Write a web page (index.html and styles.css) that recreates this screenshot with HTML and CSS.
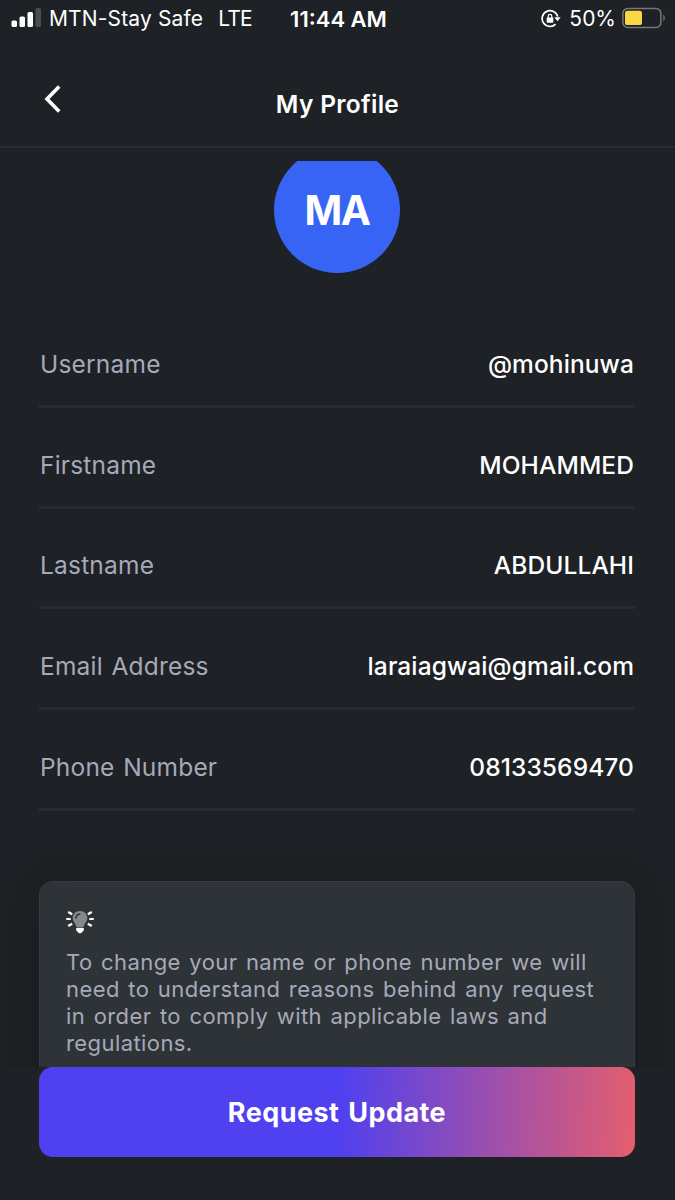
FILE: index.html
```
<!DOCTYPE html>
<html lang="en">

<head>
    <meta charset="UTF-8">
    <meta name="viewport" content="width=device-width, initial-scale=1.0">
    <title>My Profile</title>
    <link rel="stylesheet" href="styles.css">
</head>

<body>
    <div class="screen">
        <!-- Status bar -->
        <div class="status-bar">
            <div class="status-left">
                <svg class="signal" width="30" height="20" viewBox="0 0 30 20">
                    <rect x="0.500" y="12.500" width="5.500" height="6.500" rx="1.600" fill="#fff"/>
                    <rect x="8.500" y="8.500" width="5.500" height="10.500" rx="1.600" fill="#fff"/>
                    <rect x="16.500" y="4" width="5.500" height="15" rx="1.600" fill="#fff"/>
                    <rect x="24.500" y="0" width="5.500" height="19" rx="1.600" fill="#4b4d51"/>
                </svg>
                <span class="carrier">MTN-Stay Safe</span>
                <span class="network">LTE</span>
            </div>
            <span class="clock">11:44 AM</span>
            <div class="status-right">
                <svg class="lock" width="20" height="20" viewBox="0 0 20 20" fill="none">
                    <path d="M14.600 15.200A7.900 7.900 0 1 1 16.700 7.600" stroke="#fff" stroke-width="1.700"/>
                    <path d="M13.300 8.200h6.400l-3.200 4z" fill="#fff"/>
                    <rect x="5.700" y="8.400" width="6.600" height="5.400" rx="0.800" fill="#fff"/>
                    <path d="M7.200 9V7.200a1.800 1.800 0 0 1 3.600 0V9" stroke="#fff" stroke-width="1.200"/>
                </svg>
                <span class="percent">50%</span>
                <svg class="battery" width="44" height="22" viewBox="0 0 44 22">
                    <rect x="0.900" y="1.400" width="38" height="19" rx="5" fill="none" stroke="#75777a" stroke-width="1.500"/>
                    <rect x="3" y="3.700" width="17" height="14.300" rx="2.600" fill="#fbd644"/>
                    <path d="M41.300 7.600c2 .8 2 5.800 0 6.700z" fill="#75777a"/>
                </svg>
            </div>
        </div>

        <!-- Header -->
        <header class="header">
            <button class="back-btn" aria-label="Back">
                <svg width="18" height="28" viewBox="0 0 18 28" fill="none">
                    <path d="M15.200 1.600L3 14l12.200 12.400" stroke="#fff" stroke-width="3.600"/>
                </svg>
            </button>
            <h1>My Profile</h1>
        </header>

        <!-- Profile details -->
        <main class="content">
            <div class="avatar">MA</div>

            <div class="details">
                <div class="row">
                    <span class="label">Username</span>
                    <span class="value">@mohinuwa</span>
                </div>
                <div class="row">
                    <span class="label">Firstname</span>
                    <span class="value">MOHAMMED</span>
                </div>
                <div class="row">
                    <span class="label">Lastname</span>
                    <span class="value">ABDULLAHI</span>
                </div>
                <div class="row">
                    <span class="label">Email Address</span>
                    <span class="value">laraiagwai@gmail.com</span>
                </div>
                <div class="row">
                    <span class="label">Phone Number</span>
                    <span class="value">08133569470</span>
                </div>
            </div>

            <div class="info-card">
                <svg class="bulb" width="28" height="24" viewBox="0 0 28 24" fill="none">
                    <path d="M14 1c-4.300 0-7.300 3.100-7.300 7 0 4.300 3.700 5.600 3.900 9.500h6.800c.2-3.900 3.900-5.200 3.900-9.500 0-3.900-3-7-7.300-7z" fill="#85888d"/>
                    <path d="M10 8.200c0-2.300 1.500-3.900 3.800-4" stroke="#24282c" stroke-width="1.200" stroke-linecap="round"/>
                    <path d="M10.200 18h7.600v1.800c0 1.200-1 1.700-1.700 2.100-.5 1-1 1.300-2.100 1.300s-1.600-.3-2.100-1.300c-.7-.4-1.700-.9-1.700-2.100z" fill="#fff"/>
                    <path d="M0.300 9h4.400M23.300 9h4.400M2.200 2l4 2.300M25.800 2l-4 2.300M2.200 16l4-2.300M25.800 16l-4-2.300" stroke="#fff" stroke-width="2.200"/>
                </svg>
                <p>
                    To change your name or phone number we will<br>
                    need to understand reasons behind any request<br>
                    in order to comply with applicable laws and<br>
                    regulations.
                </p>
            </div>
        </main>

        <!-- Bottom action -->
        <footer class="footer">
            <button class="update-btn">Request Update</button>
        </footer>
    </div>
</body>

</html>
```
FILE: styles.css
```
:root {
    --bg-color: #1e2125;
    --text-color: #fff;
    --muted-color: #a6a9b7;
    --line-color: #282b2f;
    --card-bg: #2e3337;
    --card-border: #383c40;
}

* {
    box-sizing: border-box;
}

body {
    font-family: Inter, sans-serif;
    margin: 0;
    background-color: var(--bg-color);
    color: var(--text-color);
}

button {
    font-family: inherit;
    color: inherit;
    border: none;
    padding: 0;
    cursor: pointer;
}

.screen {
    height: 1200px;
    display: flex;
    flex-direction: column;
    overflow: hidden;
}

/* Status bar */
.status-bar {
    height: 38px;
    flex: none;
    display: grid;
    grid-template-columns: 1fr auto 1fr;
    align-items: center;
    padding: 0 9px 0 11px;
    font-size: 21px;
    line-height: 38px;
}

.status-left,
.status-right {
    display: flex;
    align-items: center;
}

.status-right {
    justify-content: flex-end;
}

.signal {
    margin: -3px 8px 0 0;
}

.carrier {
    letter-spacing: 0.15px;
}

.network {
    margin-left: 15px;
    letter-spacing: -0.9px;
}

.clock {
    font-size: 22px;
    font-weight: 600;
}

.lock {
    margin-right: 8px;
}

.battery {
    margin: -3px 0 0 6px;
}

/* Header */
.header {
    height: 110px;
    flex: none;
    display: grid;
    grid-template-columns: 80px 1fr 80px;
    align-items: center;
    padding-top: 24px;
    border-bottom: 2px solid #272a2e;
}

.back-btn {
    background: none;
    justify-self: start;
    height: 28px;
    margin: -11px 0 0 44px;
}

.header h1 {
    margin: 0;
    font-size: 24.5px;
    font-weight: 600;
    letter-spacing: 0.3px;
    text-align: center;
}

/* Scrolled content */
.content {
    flex: 1;
    min-height: 0;
    margin-top: 13px;
    padding: 0 40px 0 39px;
    overflow: hidden;
}

.avatar {
    width: 126px;
    height: 126px;
    margin: -14px auto 34px;
    border-radius: 50%;
    background-color: #3864f6;
    display: flex;
    align-items: center;
    justify-content: center;
    font-size: 40.5px;
    font-weight: 700;
    letter-spacing: -1.5px;
}

.row {
    height: 100.750px;
    display: flex;
    justify-content: space-between;
    align-items: center;
    padding: 16px 1px 0;
    border-bottom: 3px solid var(--line-color);
    font-size: 24.5px;
}

.label {
    color: var(--muted-color);
    letter-spacing: 0.2px;
    word-spacing: 1.5px;
}

.value {
    font-weight: 500;
    letter-spacing: 0.1px;
}

/* Info card */
.info-card {
    height: 230px;
    margin-top: 70px;
    padding: 28px 26px;
    background-color: var(--card-bg);
    border: 1.500px solid var(--card-border);
    border-radius: 14px;
    box-shadow: 0 0 36px rgba(20, 22, 28, 0.5);
}

.bulb {
    display: block;
}

.info-card p {
    margin: 15px 0 0;
    color: var(--muted-color);
    font-size: 22px;
    line-height: 27px;
    letter-spacing: 0.42px;
    word-spacing: 1.9px;
    white-space: nowrap;
}

/* Bottom action */
.footer {
    flex: none;
    height: 133px;
    padding: 0 40px 0 39px;
}

.update-btn {
    width: 100%;
    height: 90px;
    border-radius: 14px;
    background: linear-gradient(92deg, #4f40f0 50%, #e45e6e 100%);
    font-size: 27px;
    font-weight: 700;
    letter-spacing: 0.45px;
    word-spacing: 2px;
}
```
